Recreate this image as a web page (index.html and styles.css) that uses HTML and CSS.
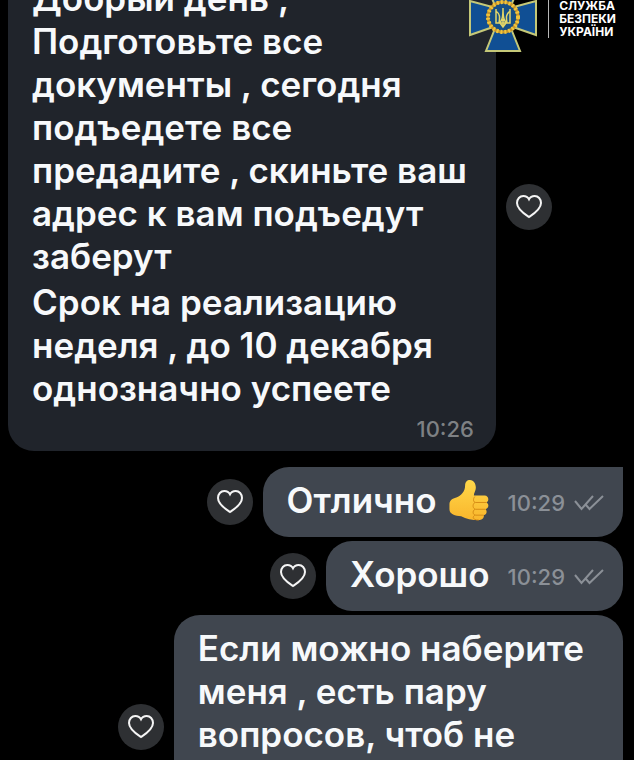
FILE: index.html
```html
<!DOCTYPE html>
<html lang="ru">
<head>
  <meta charset="UTF-8">
  <meta name="viewport" content="width=device-width, initial-scale=1.0">
  <title>Чат</title>
  <link rel="stylesheet" href="styles.css">
</head>
<body>
  <svg class="sprite" aria-hidden="true">
    <symbol id="heart" viewBox="0 0 28 26">
      <path d="M14 23C11 21 2 15.500 2 9C2 5 4.800 2 8.300 2C11 2 13 3.300 14 5.300C15 3.300 17 2 19.700 2C23.200 2 26 5 26 9C26 15.500 17 21 14 23Z"/>
    </symbol>
    <symbol id="checks" viewBox="0 0 32 18">
      <path d="M2 7L8.500 15L20 2M13 11L16.500 15L30 2"/>
    </symbol>
  </svg>

  <header class="brand" lang="uk">
    <svg class="emblem" viewBox="0 0 70 70" role="img" aria-label="Герб">
      <path class="cross" d="M18 1H52L42 25L68 18V52L42 43L52 68H18L28 43L2 52V18L28 25Z"/>
      <circle class="disc" cx="35" cy="34" r="15"/>
      <circle class="wreath" cx="35" cy="34" r="15"/>
      <circle class="leaves" cx="35" cy="34" r="15"/>
      <path class="trident" d="M28 26V40H42V26M31 40C34 38 35 35 35 25C35 35 36 38 39 40M28 28C32 31 32 34 31 40M42 28C38 31 38 34 39 40M32 40L35 44L38 40M35 36V45"/>
    </svg>
    <p class="brand-name">СЛУЖБА<br>БЕЗПЕКИ<br>УКРАЇНИ</p>
  </header>

  <main class="chat">
    <article class="message incoming">
      <div class="bubble">
        <p>Добрый день ,<br>Подготовьте все<br>документы , сегодня<br>подъедете все<br>предадите , скиньте ваш<br>адрес к вам подъедут<br>заберут</p>
        <p>Срок на реализацию<br>неделя , до 10 декабря<br>однозначно успеете</p>
        <div class="meta"><time>10:26</time></div>
      </div>
      <button class="like" type="button" aria-label="Нравится"><svg><use href="#heart"/></svg></button>
    </article>

    <article class="message outgoing">
      <button class="like" type="button" aria-label="Нравится"><svg><use href="#heart"/></svg></button>
      <div class="bubble short first">
        <p>Отлично</p>
        <svg class="thumb" viewBox="0 0 42 44" role="img" aria-label="Большой палец вверх">
          <defs>
            <linearGradient id="skin" x1="0" y1="0" x2="0" y2="1">
              <stop offset="0" stop-color="#ffd84a"/>
              <stop offset="1" stop-color="#f9b62c"/>
            </linearGradient>
          </defs>
          <path class="hand" d="M1 26C1 22 4 20 8 19C13 17 17 13 17 7C17 3 19 1 22 1C26 1 28 5 28 9C28 12 26 14 26 17H37C41 17 42 22 39 24C42 26 41 30 38 31C40 33 39 37 36 37C37 40 34 42 31 42C24 42 18 41 13 38C7 38 1 36 1 31Z"/>
          <path class="fingers" d="M39 24H28C25 24 25 20 27 18M38 31H28C25 31 24 26 27 24M36 37H28C25 37 24 33 27 31M31 42C25 42 24 39 27 37"/>
        </svg>
        <div class="meta"><time>10:29</time><svg class="checks" role="img" aria-label="Прочитано"><use href="#checks"/></svg></div>
      </div>
    </article>

    <article class="message outgoing">
      <button class="like" type="button" aria-label="Нравится"><svg><use href="#heart"/></svg></button>
      <div class="bubble short">
        <p>Хорошо</p>
        <div class="meta"><time>10:29</time><svg class="checks" role="img" aria-label="Прочитано"><use href="#checks"/></svg></div>
      </div>
    </article>

    <article class="message outgoing">
      <button class="like" type="button" aria-label="Нравится"><svg><use href="#heart"/></svg></button>
      <div class="bubble long">
        <p>Если можно наберите<br>меня , есть пару<br>вопросов, чтоб не</p>
      </div>
    </article>
  </main>
</body>
</html>
```

FILE: styles.css
```css
* {
  box-sizing: border-box;
}
body {
  margin: 0;
  height: 100vh;
  overflow: hidden;
  background: #000;
  color: #f7f9fb;
  font-family: Inter, sans-serif;
  font-size: 35px;
  font-weight: 600;
  line-height: 43px;
}
p {
  margin: 0;
}
.sprite {
  position: absolute;
  width: 0;
  height: 0;
}

/* logo over the chat */
.brand {
  position: absolute;
  top: -17px;
  right: 18px;
  display: flex;
  align-items: center;
  gap: 10px;
}
.emblem {
  width: 70px;
  height: 70px;
}
.cross {
  fill: #104f94;
  stroke: #c5c878;
  stroke-width: 2;
}
.disc {
  fill: #164f86;
}
.wreath,
.leaves {
  fill: none;
  stroke: #c9952a;
  stroke-width: 3;
}
.leaves {
  stroke: #f0c53c;
  stroke-width: 4;
  stroke-dasharray: 2 2;
}
.trident {
  fill: none;
  stroke: #e2d568;
  stroke-width: 1.5;
}
.brand-name {
  border-left: 1px solid #b8b8b8;
  padding-left: 10px;
  color: #fff;
  font-size: 12px;
  font-weight: 700;
  line-height: 13px;
}

.chat {
  display: flex;
  flex-direction: column;
  gap: 4px;
  margin-top: -38px;
  padding: 0 11px 0 8px;
}
.message {
  display: flex;
  align-items: center;
  gap: 10px;
}
.incoming {
  margin-bottom: 12px;
}
.outgoing {
  justify-content: flex-end;
}
.bubble {
  border-radius: 26px;
  padding: 12px 18px 15px 24px;
  background: #40464f;
}
.incoming .bubble {
  padding: 15px 22px 10px 24px;
  background: #20242b;
}
.incoming p {
  padding-right: 7px;
}
.bubble p + p {
  margin-top: 3px;
}
.short {
  display: flex;
  align-items: center;
}
.first {
  border-top-right-radius: 0;
}
.long {
  min-height: 224px;
  padding-right: 39px;
}

.meta {
  display: flex;
  align-items: center;
  justify-content: flex-end;
  gap: 8px;
  color: #8b9097;
  font-size: 22px;
  font-weight: 500;
  line-height: 24px;
}
.incoming .meta {
  margin-top: 7px;
  color: #7e8184;
}
.short .meta {
  margin: 4px 0 0 18px;
}
.checks {
  width: 32px;
  height: 18px;
  fill: none;
  stroke: #8b9097;
  stroke-width: 2;
}
.thumb {
  width: 42px;
  height: 43px;
  margin-left: 11px;
}
.hand {
  fill: url(#skin);
}
.fingers {
  fill: none;
  stroke: #d58b14;
  stroke-width: 1;
}

.like {
  display: flex;
  align-items: center;
  justify-content: center;
  flex: none;
  width: 46px;
  height: 46px;
  padding: 0;
  border: 0;
  border-radius: 50%;
  background: #2e3033;
}
.like svg {
  width: 28px;
  height: 26px;
  fill: none;
  stroke: #f5f5f5;
  stroke-width: 2;
}
```
